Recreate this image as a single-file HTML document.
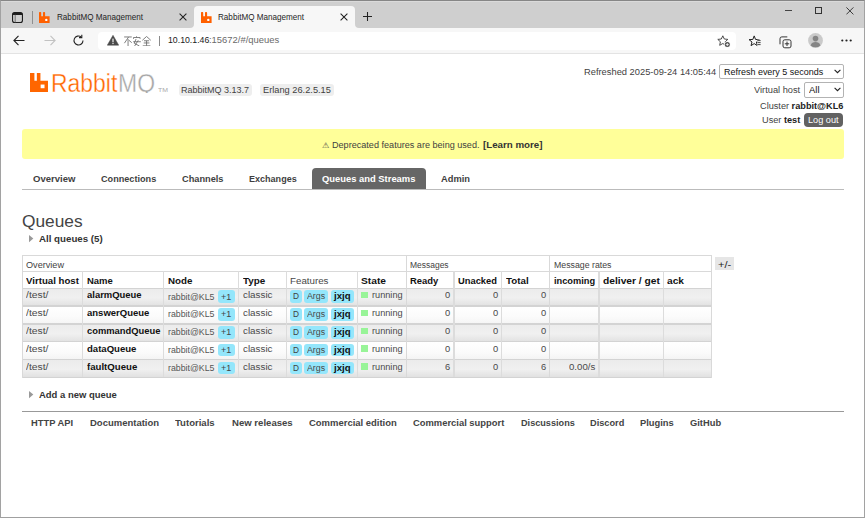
<!DOCTYPE html>
<html><head><meta charset="utf-8">
<style>
*{box-sizing:border-box}
html,body{margin:0;padding:0;background:#fff;width:865px;height:518px;overflow:hidden}
body{font-family:"Liberation Sans",sans-serif;position:relative}
.a{position:absolute;white-space:nowrap}
.t{position:absolute;white-space:nowrap;transform-origin:0 0;font-family:"Liberation Sans",sans-serif}
.t b{font-weight:bold;color:#222}
</style></head><body>
<style>
#tabstrip{position:absolute;left:0;top:0;width:865px;height:28px;background:#cfcfcf}
#toolbar{position:absolute;left:0;top:28px;width:865px;height:26px;background:#f7f7f7;border-bottom:1px solid #e3e3e3}
.tab{position:absolute;top:6px;height:22px;border-radius:4px 4px 0 0}
.ttl{font-size:9.4px;color:#1f1f1f;transform-origin:0 0;transform:scaleX(0.865)}
#addr{position:absolute;left:97.5px;top:31.5px;width:638px;height:18.5px;background:#fff;border-radius:4px}
</style>
<div id="tabstrip"></div>
<div id="toolbar"></div>
<svg class="a" style="left:11.5px;top:11.5px" width="11" height="11" viewBox="0 0 11 11"><rect x="0.55" y="0.55" width="9.9" height="9.9" rx="2" fill="none" stroke="#1d1d1d" stroke-width="1.1"/><path d="M0.5 3V2.6A2.1 2.1 0 0 1 2.6 0.5H8.4A2.1 2.1 0 0 1 10.5 2.6V3Z" fill="#1d1d1d"/><line x1="3.2" y1="2.8" x2="3.2" y2="10.4" stroke="#666" stroke-width="0.9"/></svg>
<div class="a" style="left:32px;top:10.5px;width:1px;height:13px;background:#8f8f8f"></div>
<svg class="a" style="left:39.3px;top:11.6px" width="11" height="11" viewBox="0 0 11 11"><path d="M0 1A1.1 1.1 0 0 1 2.2 1V4.3H4V1A1.05 1.05 0 0 1 6.1 1V4.3H10.6V10.9H0Z" fill="#ff6000"/><circle cx="7.3" cy="7.9" r="1.2" fill="#fff"/></svg>
<div class="a ttl" style="left:57.3px;top:10.8px">RabbitMQ Management</div>
<svg class="a" style="left:179px;top:12.5px" width="8" height="8" viewBox="0 0 8 8"><path d="M0.6 0.6L7.4 7.4M7.4 0.6L0.6 7.4" stroke="#222" stroke-width="1.05"/></svg>
<div class="tab" style="left:193.7px;width:161.5px;background:#f7f7f7"></div>
<svg class="a" style="left:189.7px;top:24px" width="4" height="4" viewBox="0 0 4 4"><path d="M4 0V4H0A4 4 0 0 0 4 0Z" fill="#f7f7f7"/></svg>
<svg class="a" style="left:355.2px;top:24px" width="4" height="4" viewBox="0 0 4 4"><path d="M0 0V4H4A4 4 0 0 1 0 0Z" fill="#f7f7f7"/></svg>
<svg class="a" style="left:201.2px;top:11.6px" width="11" height="11" viewBox="0 0 11 11"><path d="M0 1A1.1 1.1 0 0 1 2.2 1V4.3H4V1A1.05 1.05 0 0 1 6.1 1V4.3H10.6V10.9H0Z" fill="#ff6000"/><circle cx="7.3" cy="7.9" r="1.2" fill="#fff"/></svg>
<div class="a ttl" style="left:218.2px;top:10.8px">RabbitMQ Management</div>
<svg class="a" style="left:340px;top:12.5px" width="8" height="8" viewBox="0 0 8 8"><path d="M0.6 0.6L7.4 7.4M7.4 0.6L0.6 7.4" stroke="#222" stroke-width="1.05"/></svg>
<svg class="a" style="left:362.5px;top:11.5px" width="9" height="9" viewBox="0 0 9 9"><path d="M4.5 0V9M0 4.5H9" stroke="#222" stroke-width="1.05"/></svg>
<div class="a" style="left:785px;top:9.6px;width:6.5px;height:1px;background:#444"></div>
<div class="a" style="left:815.2px;top:7.2px;width:7px;height:7px;border:1px solid #333"></div>
<svg class="a" style="left:846px;top:7px" width="8" height="8" viewBox="0 0 8 8"><path d="M0.4 0.4L7.4 7.4M7.4 0.4L0.4 7.4" stroke="#333" stroke-width="0.95"/></svg>
<svg class="a" style="left:13px;top:35px" width="12" height="11" viewBox="0 0 12 11"><path d="M11.5 5.5H1M5.5 0.8L0.9 5.5L5.5 10.2" fill="none" stroke="#222" stroke-width="1.1"/></svg>
<svg class="a" style="left:43.5px;top:35px" width="12" height="11" viewBox="0 0 12 11"><path d="M0.5 5.5H11M6.5 0.8L11.1 5.5L6.5 10.2" fill="none" stroke="#c2c2c2" stroke-width="1.1"/></svg>
<svg class="a" style="left:72px;top:34px" width="13" height="13" viewBox="0 0 13 13"><path d="M11 6.5A4.5 4.5 0 1 1 9.2 2.9" fill="none" stroke="#222" stroke-width="1.1"/><path d="M9.8 0.8V3.6H7" fill="none" stroke="#222" stroke-width="1.1"/></svg>
<div id="addr"></div>
<svg class="a" style="left:106.5px;top:35.3px" width="12" height="10.5" viewBox="0 0 12 10.5"><path d="M6 0.3L11.7 10.2H0.3Z" fill="#4a4a4a" stroke="#4a4a4a" stroke-width="0.5" stroke-linejoin="round"/><rect x="5.45" y="3.6" width="1.1" height="3.7" fill="#fff"/><rect x="5.45" y="8" width="1.1" height="1.1" fill="#fff"/></svg>
<svg class="a" style="left:123px;top:35.5px" width="29" height="10.5" viewBox="0 0 29 11" fill="none" stroke="#6b6b6b" stroke-width="0.9">
<path d="M0.5 1H8.5M5.2 1L0.8 7.5M4.6 3.2V10.8M5.5 4.5L8.5 7"/>
<path d="M13.5 0.3V1.5M10.3 3V1.6H17.2V3M13 3.2L11 7.5L16.5 10.5M10 6H18M15.3 4.5L11.5 10.5"/>
<path d="M24 0.5L19.6 4.5M24 0.5L28.4 4.5M21.3 5H26.7M21 7.3H27M24 5V10.2M20 10.3H28"/>
</svg>
<div class="a" style="left:158.5px;top:35.5px;width:1px;height:10px;background:#8a8a8a"></div>
<div class="a" style="left:168.3px;top:35.2px;font-size:9.3px;color:#1a1a1a;transform-origin:0 0;transform:scaleX(0.94)">10.10.1.46</div><div class="a" style="left:208.6px;top:35.2px;font-size:9.3px;color:#6a6a6a;transform-origin:0 0;transform:scaleX(1.015)">:15672/#/queues</div>
<svg class="a" style="left:716.5px;top:35px" width="14" height="13" viewBox="0 0 14 13"><path d="M5.8 0.8L7.3 4L10.8 4.4L8.2 6.8L8.9 10.3L5.8 8.5L2.7 10.3L3.4 6.8L0.8 4.4L4.3 4Z" fill="none" stroke="#3a3a3a" stroke-width="0.9" stroke-linejoin="round"/><circle cx="10.3" cy="9.6" r="3.2" fill="#f7f7f7"/><circle cx="10.3" cy="9.6" r="2.5" fill="#505050"/><path d="M10.3 8.1V11.1M8.8 9.6H11.8" stroke="#fff" stroke-width="0.8"/></svg>
<svg class="a" style="left:748.8px;top:34.5px" width="13" height="13" viewBox="0 0 13 13"><path d="M5.20 0.90L6.55 4.44L10.34 4.63L7.39 7.01L8.37 10.67L5.20 8.60L2.03 10.67L3.01 7.01L0.06 4.63L3.85 4.44Z" fill="none" stroke="#222" stroke-width="1" stroke-linejoin="round"/><rect x="8.3" y="4.6" width="5" height="7" fill="#f7f7f7"/><path d="M8.4 5.6H11.6M8.4 7.6H11.6M8.4 9.6H11.6" stroke="#333" stroke-width="0.9"/></svg>
<svg class="a" style="left:778.5px;top:35.5px" width="13" height="13" viewBox="0 0 13 13"><rect x="4" y="3.8" width="8" height="8" rx="1.8" fill="none" stroke="#2a2a2a" stroke-width="0.95"/><path d="M1 8.3V2.7A1.8 1.8 0 0 1 2.8 0.9H8.3" fill="none" stroke="#2a2a2a" stroke-width="0.95"/><path d="M8 5.6V10M5.8 7.8H10.2" stroke="#2a2a2a" stroke-width="0.95"/></svg>
<svg class="a" style="left:807.8px;top:32.8px" width="15" height="15" viewBox="0 0 15 15"><circle cx="7.5" cy="7.5" r="7.4" fill="#cacaca"/><circle cx="7.5" cy="5.6" r="2.8" fill="#858585"/><path d="M2.6 12.4C3.3 9.8 5.2 9.1 7.5 9.1S11.7 9.8 12.4 12.4A7.4 7.4 0 0 1 2.6 12.4Z" fill="#858585"/></svg>
<svg class="a" style="left:841px;top:39px" width="11" height="3" viewBox="0 0 11 3"><circle cx="1.3" cy="1.5" r="1.1" fill="#222"/><circle cx="5.5" cy="1.5" r="1.1" fill="#222"/><circle cx="9.7" cy="1.5" r="1.1" fill="#222"/></svg>

<svg class="a" style="left:30px;top:73px" width="18" height="19" viewBox="0 0 17.6 18.6"><path d="M0 0H4.3V7.7H6.7V0H10.2V7.7H17.6V18.6H0Z" fill="#f60"/><rect x="10.4" y="11.3" width="3.8" height="3.6" fill="#fff"/></svg><div class="a" style="left:135px;top:93px;width:22px;height:5px;background:#fff;z-index:5"></div><div class="a" style="left:178.8px;top:83.8px;width:72.8px;height:11.8px;background:#eee;border-radius:3px"></div><div class="a" style="left:260.4px;top:83.8px;width:73.6px;height:11.8px;background:#eee;border-radius:3px"></div><div class="a" style="left:718.7px;top:63.5px;width:125px;height:15.5px;background:#fff;border:1px solid #b3b3b3;border-radius:2px"></div><svg class="a" style="left:834px;top:69px" width="7" height="5" viewBox="0 0 7 5"><path d="M0.6 0.8L3.5 3.7L6.4 0.8" fill="none" stroke="#222" stroke-width="1.1"/></svg><div class="a" style="left:803.8px;top:82.4px;width:39.8px;height:15.2px;background:#fff;border:1px solid #b3b3b3;border-radius:2px"></div><svg class="a" style="left:834px;top:87px" width="7" height="5" viewBox="0 0 7 5"><path d="M0.6 0.8L3.5 3.7L6.4 0.8" fill="none" stroke="#222" stroke-width="1.1"/></svg><div class="a" style="left:803.8px;top:113.3px;width:39.5px;height:13.3px;background:#626262;border-radius:4px"></div><div class="a" style="left:22px;top:128.9px;width:821.5px;height:30.5px;background:#ffff99;border-radius:3px"></div><div class="a" style="left:22px;top:188.9px;width:821.5px;height:1.1px;background:#bbb"></div><div class="a" style="left:311.8px;top:167.9px;width:114.2px;height:21px;background:#666;border-radius:4px 4px 0 0"></div><svg class="a" style="left:29px;top:234.5px" width="5" height="8" viewBox="0 0 5 8"><path d="M0 0L4.3 3.6L0 7.2Z" fill="#999"/></svg><div class="a" style="left:22.4px;top:255.3px;width:688.8000000000001px;height:122.09999999999997px;background:#fff"></div><div class="a" style="left:22.4px;top:288.1px;width:688.8000000000001px;height:17.899999999999977px;background:linear-gradient(#ebebeb,#f0f0f0 55%,#e1e1e1)"></div><div class="a" style="left:22.4px;top:306.0px;width:688.8000000000001px;height:18.0px;background:linear-gradient(#fff,#fbfbfb 60%,#f4f4f4)"></div><div class="a" style="left:22.4px;top:324.0px;width:688.8000000000001px;height:17.80000000000001px;background:linear-gradient(#ebebeb,#f0f0f0 55%,#e1e1e1)"></div><div class="a" style="left:22.4px;top:341.8px;width:688.8000000000001px;height:17.69999999999999px;background:linear-gradient(#fff,#fbfbfb 60%,#f4f4f4)"></div><div class="a" style="left:22.4px;top:359.5px;width:688.8000000000001px;height:17.899999999999977px;background:linear-gradient(#ebebeb,#f0f0f0 55%,#e1e1e1)"></div><div class="a" style="left:22.4px;top:255.1px;width:688.8000000000001px;height:1.2px;background:#d9d9d9"></div><div class="a" style="left:22.4px;top:271.1px;width:688.8000000000001px;height:1.2px;background:#d9d9d9"></div><div class="a" style="left:22.4px;top:287.5px;width:688.8000000000001px;height:1.2px;background:#d3d3d3"></div><div class="a" style="left:22.4px;top:305.4px;width:688.8000000000001px;height:1.2px;background:#d3d3d3"></div><div class="a" style="left:22.4px;top:323.4px;width:688.8000000000001px;height:1.2px;background:#d3d3d3"></div><div class="a" style="left:22.4px;top:341.2px;width:688.8000000000001px;height:1.2px;background:#d3d3d3"></div><div class="a" style="left:22.4px;top:358.9px;width:688.8000000000001px;height:1.2px;background:#d3d3d3"></div><div class="a" style="left:22.4px;top:376.79999999999995px;width:688.8000000000001px;height:1.2px;background:#d3d3d3"></div><div class="a" style="left:21.9px;top:255.3px;width:1.2px;height:122.69999999999996px;background:#d9d9d9"></div><div class="a" style="left:710.6px;top:255.3px;width:1.2px;height:122.69999999999996px;background:#d9d9d9"></div><div class="a" style="left:406.2px;top:255.3px;width:1.2px;height:122.09999999999997px;background:#d9d9d9"></div><div class="a" style="left:549.0px;top:255.3px;width:1.2px;height:122.09999999999997px;background:#d9d9d9"></div><div class="a" style="left:82.10000000000001px;top:271.4px;width:1.2px;height:106.0px;background:#dcdcdc"></div><div class="a" style="left:162.70000000000002px;top:271.4px;width:1.2px;height:106.0px;background:#dcdcdc"></div><div class="a" style="left:237.8px;top:271.4px;width:1.2px;height:106.0px;background:#dcdcdc"></div><div class="a" style="left:285.7px;top:271.4px;width:1.2px;height:106.0px;background:#dcdcdc"></div><div class="a" style="left:356.79999999999995px;top:271.4px;width:1.2px;height:106.0px;background:#dcdcdc"></div><div class="a" style="left:453.4px;top:271.4px;width:1.2px;height:106.0px;background:#dcdcdc"></div><div class="a" style="left:500.79999999999995px;top:271.4px;width:1.2px;height:106.0px;background:#dcdcdc"></div><div class="a" style="left:598.4px;top:271.4px;width:1.2px;height:106.0px;background:#dcdcdc"></div><div class="a" style="left:663.0px;top:271.4px;width:1.2px;height:106.0px;background:#dcdcdc"></div><div class="a" style="left:217.8px;top:290.2px;width:17px;height:12.6px;background:#94e6fb;border-radius:3px"></div><div class="a" style="left:290px;top:290.2px;width:11.6px;height:12.6px;background:#94e6fb;border-radius:3px"></div><div class="a" style="left:304.4px;top:290.2px;width:23.5px;height:12.6px;background:#94e6fb;border-radius:3px"></div><div class="a" style="left:331px;top:290.2px;width:22.6px;height:12.6px;background:#94e6fb;border-radius:3px"></div><div class="a" style="left:361.3px;top:291.7px;width:7px;height:6.6px;background:#98f498"></div><div class="a" style="left:217.8px;top:308.09999999999997px;width:17px;height:12.6px;background:#94e6fb;border-radius:3px"></div><div class="a" style="left:290px;top:308.09999999999997px;width:11.6px;height:12.6px;background:#94e6fb;border-radius:3px"></div><div class="a" style="left:304.4px;top:308.09999999999997px;width:23.5px;height:12.6px;background:#94e6fb;border-radius:3px"></div><div class="a" style="left:331px;top:308.09999999999997px;width:22.6px;height:12.6px;background:#94e6fb;border-radius:3px"></div><div class="a" style="left:361.3px;top:309.59999999999997px;width:7px;height:6.6px;background:#98f498"></div><div class="a" style="left:217.8px;top:326.09999999999997px;width:17px;height:12.6px;background:#94e6fb;border-radius:3px"></div><div class="a" style="left:290px;top:326.09999999999997px;width:11.6px;height:12.6px;background:#94e6fb;border-radius:3px"></div><div class="a" style="left:304.4px;top:326.09999999999997px;width:23.5px;height:12.6px;background:#94e6fb;border-radius:3px"></div><div class="a" style="left:331px;top:326.09999999999997px;width:22.6px;height:12.6px;background:#94e6fb;border-radius:3px"></div><div class="a" style="left:361.3px;top:327.59999999999997px;width:7px;height:6.6px;background:#98f498"></div><div class="a" style="left:217.8px;top:343.9px;width:17px;height:12.6px;background:#94e6fb;border-radius:3px"></div><div class="a" style="left:290px;top:343.9px;width:11.6px;height:12.6px;background:#94e6fb;border-radius:3px"></div><div class="a" style="left:304.4px;top:343.9px;width:23.5px;height:12.6px;background:#94e6fb;border-radius:3px"></div><div class="a" style="left:331px;top:343.9px;width:22.6px;height:12.6px;background:#94e6fb;border-radius:3px"></div><div class="a" style="left:361.3px;top:345.4px;width:7px;height:6.6px;background:#98f498"></div><div class="a" style="left:217.8px;top:361.59999999999997px;width:17px;height:12.6px;background:#94e6fb;border-radius:3px"></div><div class="a" style="left:290px;top:361.59999999999997px;width:11.6px;height:12.6px;background:#94e6fb;border-radius:3px"></div><div class="a" style="left:304.4px;top:361.59999999999997px;width:23.5px;height:12.6px;background:#94e6fb;border-radius:3px"></div><div class="a" style="left:331px;top:361.59999999999997px;width:22.6px;height:12.6px;background:#94e6fb;border-radius:3px"></div><div class="a" style="left:361.3px;top:363.09999999999997px;width:7px;height:6.6px;background:#98f498"></div><div class="a" style="left:715px;top:257.3px;width:18.9px;height:12.5px;background:#e6e6e6"></div><svg class="a" style="left:28.8px;top:390.9px" width="5" height="8" viewBox="0 0 5 8"><path d="M0 0L4.3 3.6L0 7.2Z" fill="#999"/></svg><div class="a" style="left:22px;top:410.8px;width:821.5px;height:1.1px;background:#999"></div>
<div class="t" style="left:50.80px;top:71.47px;font-size:25.2px;line-height:25.2px;font-weight:normal;color:#f60;transform:scaleX(0.9106);-webkit-text-stroke:0.35px #fff">Rabbit</div><div class="t" style="left:118.20px;top:71.47px;font-size:25.2px;line-height:25.2px;font-weight:normal;color:#a6a6a6;transform:scaleX(0.9118);-webkit-text-stroke:0.35px #fff">MQ</div><div class="t" style="left:158.00px;top:87.45px;font-size:6.2px;line-height:6.2px;font-weight:normal;color:#aaa;transform:scaleX(1.1189);">TM</div><div class="t" style="left:181.40px;top:86.17px;font-size:8.9px;line-height:8.9px;font-weight:normal;color:#3f3f3f;transform:scaleX(1.0150);">RabbitMQ 3.13.7</div><div class="t" style="left:263.30px;top:86.17px;font-size:8.9px;line-height:8.9px;font-weight:normal;color:#3f3f3f;transform:scaleX(1.0424);">Erlang 26.2.5.15</div><div class="t" style="left:583.50px;top:68.17px;font-size:8.9px;line-height:8.9px;font-weight:normal;color:#3f3f3f;transform:scaleX(1.0506);">Refreshed 2025-09-24 14:05:44</div><div class="t" style="left:724.30px;top:67.78px;font-size:9px;line-height:9px;font-weight:normal;color:#111;transform:scaleX(0.9964);">Refresh every 5 seconds</div><div class="t" style="left:754.40px;top:86.37px;font-size:8.9px;line-height:8.9px;font-weight:normal;color:#3f3f3f;transform:scaleX(1.0441);">Virtual host</div><div class="t" style="left:809.00px;top:86.28px;font-size:9px;line-height:9px;font-weight:normal;color:#111;transform:scaleX(1.0484);">All</div><div class="t" style="left:759.80px;top:101.67px;font-size:8.9px;line-height:8.9px;font-weight:normal;color:#3f3f3f;transform:scaleX(1.0340);">Cluster <b>rabbit@KL6</b></div><div class="t" style="left:762.00px;top:116.27px;font-size:8.9px;line-height:8.9px;font-weight:normal;color:#3f3f3f;transform:scaleX(1.0347);">User <b>test</b></div><div class="t" style="left:808.40px;top:116.47px;font-size:8.9px;line-height:8.9px;font-weight:normal;color:#fff;transform:scaleX(1.0329);">Log out</div><div class="t" style="left:321.90px;top:141.56px;font-size:8.2px;line-height:8.2px;font-weight:normal;color:#4a4a4a;transform:scaleX(1.0286);">&#9888;</div><div class="t" style="left:332.10px;top:140.87px;font-size:8.9px;line-height:8.9px;font-weight:normal;color:#3f3f3f;transform:scaleX(1.0238);">Deprecated features are being used.</div><div class="t" style="left:483.20px;top:140.87px;font-size:8.9px;line-height:8.9px;font-weight:bold;color:#333;transform:scaleX(1.0968);">[Learn more]</div><div class="t" style="left:32.80px;top:174.87px;font-size:8.9px;line-height:8.9px;font-weight:bold;color:#3f3f3f;transform:scaleX(1.0738);">Overview</div><div class="t" style="left:101.00px;top:174.87px;font-size:8.9px;line-height:8.9px;font-weight:bold;color:#3f3f3f;transform:scaleX(1.0270);">Connections</div><div class="t" style="left:181.50px;top:174.87px;font-size:8.9px;line-height:8.9px;font-weight:bold;color:#3f3f3f;transform:scaleX(1.0387);">Channels</div><div class="t" style="left:248.80px;top:174.87px;font-size:8.9px;line-height:8.9px;font-weight:bold;color:#3f3f3f;transform:scaleX(1.0176);">Exchanges</div><div class="t" style="left:441.00px;top:174.87px;font-size:8.9px;line-height:8.9px;font-weight:bold;color:#3f3f3f;transform:scaleX(1.0467);">Admin</div><div class="t" style="left:322.30px;top:174.87px;font-size:8.9px;line-height:8.9px;font-weight:bold;color:#fff;transform:scaleX(1.0578);">Queues and Streams</div><div class="t" style="left:21.90px;top:213.96px;font-size:16px;line-height:16px;font-weight:normal;color:#444;transform:scaleX(1.0812);">Queues</div><div class="t" style="left:39.30px;top:235.27px;font-size:8.9px;line-height:8.9px;font-weight:bold;color:#333;transform:scaleX(1.0944);">All queues (5)</div><div class="t" style="left:26.00px;top:260.77px;font-size:8.9px;line-height:8.9px;font-weight:normal;color:#3f3f3f;transform:scaleX(1.0270);">Overview</div><div class="t" style="left:410.20px;top:260.77px;font-size:8.9px;line-height:8.9px;font-weight:normal;color:#3f3f3f;transform:scaleX(0.9542);">Messages</div><div class="t" style="left:553.90px;top:260.77px;font-size:8.9px;line-height:8.9px;font-weight:normal;color:#3f3f3f;transform:scaleX(0.9877);">Message rates</div><div class="t" style="left:26.30px;top:277.07px;font-size:8.9px;line-height:8.9px;font-weight:bold;color:#111;transform:scaleX(1.0872);">Virtual host</div><div class="t" style="left:86.90px;top:277.07px;font-size:8.9px;line-height:8.9px;font-weight:bold;color:#111;transform:scaleX(1.0667);">Name</div><div class="t" style="left:167.60px;top:277.07px;font-size:8.9px;line-height:8.9px;font-weight:bold;color:#111;transform:scaleX(1.0997);">Node</div><div class="t" style="left:242.70px;top:277.07px;font-size:8.9px;line-height:8.9px;font-weight:bold;color:#111;transform:scaleX(1.1115);">Type</div><div class="t" style="left:289.80px;top:277.07px;font-size:8.9px;line-height:8.9px;font-weight:normal;color:#484848;transform:scaleX(1.0990);">Features</div><div class="t" style="left:361.40px;top:277.07px;font-size:8.9px;line-height:8.9px;font-weight:bold;color:#111;transform:scaleX(1.1519);">State</div><div class="t" style="left:410.30px;top:277.07px;font-size:8.9px;line-height:8.9px;font-weight:bold;color:#111;transform:scaleX(1.0623);">Ready</div><div class="t" style="left:458.20px;top:277.07px;font-size:8.9px;line-height:8.9px;font-weight:bold;color:#111;transform:scaleX(1.0514);">Unacked</div><div class="t" style="left:506.30px;top:277.07px;font-size:8.9px;line-height:8.9px;font-weight:bold;color:#111;transform:scaleX(1.0999);">Total</div><div class="t" style="left:553.90px;top:277.07px;font-size:8.9px;line-height:8.9px;font-weight:bold;color:#111;transform:scaleX(1.0417);">incoming</div><div class="t" style="left:602.90px;top:277.07px;font-size:8.9px;line-height:8.9px;font-weight:bold;color:#111;transform:scaleX(1.1535);">deliver / get</div><div class="t" style="left:667.20px;top:277.07px;font-size:8.9px;line-height:8.9px;font-weight:bold;color:#111;transform:scaleX(1.1477);">ack</div><div class="t" style="left:25.90px;top:291.37px;font-size:8.9px;line-height:8.9px;font-weight:normal;color:#4a4a4a;transform:scaleX(1.1688);">/test/</div><div class="t" style="left:86.80px;top:291.37px;font-size:8.9px;line-height:8.9px;font-weight:bold;color:#111;transform:scaleX(1.0641);">alarmQueue</div><div class="t" style="left:167.90px;top:292.57px;font-size:8.9px;line-height:8.9px;font-weight:normal;color:#555;transform:scaleX(0.9890);">rabbit@KL5</div><div class="t" style="left:220.60px;top:292.57px;font-size:8.9px;line-height:8.9px;font-weight:normal;color:#444;transform:scaleX(1.0074);">+1</div><div class="t" style="left:242.70px;top:291.37px;font-size:8.9px;line-height:8.9px;font-weight:normal;color:#4a4a4a;transform:scaleX(1.1073);">classic</div><div class="t" style="left:292.80px;top:292.37px;font-size:8.9px;line-height:8.9px;font-weight:normal;color:#404040;transform:scaleX(0.9343);">D</div><div class="t" style="left:307.10px;top:292.37px;font-size:8.9px;line-height:8.9px;font-weight:normal;color:#484848;transform:scaleX(0.9918);">Args</div><div class="t" style="left:334.00px;top:292.37px;font-size:8.9px;line-height:8.9px;font-weight:bold;color:#111;transform:scaleX(1.0852);">jxjq</div><div class="t" style="left:371.50px;top:291.37px;font-size:8.9px;line-height:8.9px;font-weight:normal;color:#4a4a4a;transform:scaleX(1.0335);">running</div><div class="t" style="left:444.80px;top:291.37px;font-size:8.9px;line-height:8.9px;font-weight:normal;color:#4a4a4a;transform:scaleX(1.0532);">0</div><div class="t" style="left:492.50px;top:291.37px;font-size:8.9px;line-height:8.9px;font-weight:normal;color:#4a4a4a;transform:scaleX(1.0532);">0</div><div class="t" style="left:540.80px;top:291.37px;font-size:8.9px;line-height:8.9px;font-weight:normal;color:#4a4a4a;transform:scaleX(1.0532);">0</div><div class="t" style="left:25.90px;top:309.27px;font-size:8.9px;line-height:8.9px;font-weight:normal;color:#4a4a4a;transform:scaleX(1.1688);">/test/</div><div class="t" style="left:86.80px;top:309.27px;font-size:8.9px;line-height:8.9px;font-weight:bold;color:#111;transform:scaleX(1.0718);">answerQueue</div><div class="t" style="left:167.90px;top:310.47px;font-size:8.9px;line-height:8.9px;font-weight:normal;color:#555;transform:scaleX(0.9890);">rabbit@KL5</div><div class="t" style="left:220.60px;top:310.47px;font-size:8.9px;line-height:8.9px;font-weight:normal;color:#444;transform:scaleX(1.0074);">+1</div><div class="t" style="left:242.70px;top:309.27px;font-size:8.9px;line-height:8.9px;font-weight:normal;color:#4a4a4a;transform:scaleX(1.1073);">classic</div><div class="t" style="left:292.80px;top:310.27px;font-size:8.9px;line-height:8.9px;font-weight:normal;color:#404040;transform:scaleX(0.9343);">D</div><div class="t" style="left:307.10px;top:310.27px;font-size:8.9px;line-height:8.9px;font-weight:normal;color:#484848;transform:scaleX(0.9918);">Args</div><div class="t" style="left:334.00px;top:310.27px;font-size:8.9px;line-height:8.9px;font-weight:bold;color:#111;transform:scaleX(1.0852);">jxjq</div><div class="t" style="left:371.50px;top:309.27px;font-size:8.9px;line-height:8.9px;font-weight:normal;color:#4a4a4a;transform:scaleX(1.0335);">running</div><div class="t" style="left:444.80px;top:309.27px;font-size:8.9px;line-height:8.9px;font-weight:normal;color:#4a4a4a;transform:scaleX(1.0532);">0</div><div class="t" style="left:492.50px;top:309.27px;font-size:8.9px;line-height:8.9px;font-weight:normal;color:#4a4a4a;transform:scaleX(1.0532);">0</div><div class="t" style="left:540.80px;top:309.27px;font-size:8.9px;line-height:8.9px;font-weight:normal;color:#4a4a4a;transform:scaleX(1.0532);">0</div><div class="t" style="left:25.90px;top:327.27px;font-size:8.9px;line-height:8.9px;font-weight:normal;color:#4a4a4a;transform:scaleX(1.1688);">/test/</div><div class="t" style="left:86.80px;top:327.27px;font-size:8.9px;line-height:8.9px;font-weight:bold;color:#111;transform:scaleX(1.0568);">commandQueue</div><div class="t" style="left:167.90px;top:328.47px;font-size:8.9px;line-height:8.9px;font-weight:normal;color:#555;transform:scaleX(0.9890);">rabbit@KL5</div><div class="t" style="left:220.60px;top:328.47px;font-size:8.9px;line-height:8.9px;font-weight:normal;color:#444;transform:scaleX(1.0074);">+1</div><div class="t" style="left:242.70px;top:327.27px;font-size:8.9px;line-height:8.9px;font-weight:normal;color:#4a4a4a;transform:scaleX(1.1073);">classic</div><div class="t" style="left:292.80px;top:328.27px;font-size:8.9px;line-height:8.9px;font-weight:normal;color:#404040;transform:scaleX(0.9343);">D</div><div class="t" style="left:307.10px;top:328.27px;font-size:8.9px;line-height:8.9px;font-weight:normal;color:#484848;transform:scaleX(0.9918);">Args</div><div class="t" style="left:334.00px;top:328.27px;font-size:8.9px;line-height:8.9px;font-weight:bold;color:#111;transform:scaleX(1.0852);">jxjq</div><div class="t" style="left:371.50px;top:327.27px;font-size:8.9px;line-height:8.9px;font-weight:normal;color:#4a4a4a;transform:scaleX(1.0335);">running</div><div class="t" style="left:444.80px;top:327.27px;font-size:8.9px;line-height:8.9px;font-weight:normal;color:#4a4a4a;transform:scaleX(1.0532);">0</div><div class="t" style="left:492.50px;top:327.27px;font-size:8.9px;line-height:8.9px;font-weight:normal;color:#4a4a4a;transform:scaleX(1.0532);">0</div><div class="t" style="left:540.80px;top:327.27px;font-size:8.9px;line-height:8.9px;font-weight:normal;color:#4a4a4a;transform:scaleX(1.0532);">0</div><div class="t" style="left:25.90px;top:345.07px;font-size:8.9px;line-height:8.9px;font-weight:normal;color:#4a4a4a;transform:scaleX(1.1688);">/test/</div><div class="t" style="left:86.80px;top:345.07px;font-size:8.9px;line-height:8.9px;font-weight:bold;color:#111;transform:scaleX(1.0768);">dataQueue</div><div class="t" style="left:167.90px;top:346.27px;font-size:8.9px;line-height:8.9px;font-weight:normal;color:#555;transform:scaleX(0.9890);">rabbit@KL5</div><div class="t" style="left:220.60px;top:346.27px;font-size:8.9px;line-height:8.9px;font-weight:normal;color:#444;transform:scaleX(1.0074);">+1</div><div class="t" style="left:242.70px;top:345.07px;font-size:8.9px;line-height:8.9px;font-weight:normal;color:#4a4a4a;transform:scaleX(1.1073);">classic</div><div class="t" style="left:292.80px;top:346.07px;font-size:8.9px;line-height:8.9px;font-weight:normal;color:#404040;transform:scaleX(0.9343);">D</div><div class="t" style="left:307.10px;top:346.07px;font-size:8.9px;line-height:8.9px;font-weight:normal;color:#484848;transform:scaleX(0.9918);">Args</div><div class="t" style="left:334.00px;top:346.07px;font-size:8.9px;line-height:8.9px;font-weight:bold;color:#111;transform:scaleX(1.0852);">jxjq</div><div class="t" style="left:371.50px;top:345.07px;font-size:8.9px;line-height:8.9px;font-weight:normal;color:#4a4a4a;transform:scaleX(1.0335);">running</div><div class="t" style="left:444.80px;top:345.07px;font-size:8.9px;line-height:8.9px;font-weight:normal;color:#4a4a4a;transform:scaleX(1.0532);">0</div><div class="t" style="left:492.50px;top:345.07px;font-size:8.9px;line-height:8.9px;font-weight:normal;color:#4a4a4a;transform:scaleX(1.0532);">0</div><div class="t" style="left:540.80px;top:345.07px;font-size:8.9px;line-height:8.9px;font-weight:normal;color:#4a4a4a;transform:scaleX(1.0532);">0</div><div class="t" style="left:25.90px;top:362.77px;font-size:8.9px;line-height:8.9px;font-weight:normal;color:#4a4a4a;transform:scaleX(1.1688);">/test/</div><div class="t" style="left:86.80px;top:362.77px;font-size:8.9px;line-height:8.9px;font-weight:bold;color:#111;transform:scaleX(1.0850);">faultQueue</div><div class="t" style="left:167.90px;top:363.97px;font-size:8.9px;line-height:8.9px;font-weight:normal;color:#555;transform:scaleX(0.9890);">rabbit@KL5</div><div class="t" style="left:220.60px;top:363.97px;font-size:8.9px;line-height:8.9px;font-weight:normal;color:#444;transform:scaleX(1.0074);">+1</div><div class="t" style="left:242.70px;top:362.77px;font-size:8.9px;line-height:8.9px;font-weight:normal;color:#4a4a4a;transform:scaleX(1.1073);">classic</div><div class="t" style="left:292.80px;top:363.77px;font-size:8.9px;line-height:8.9px;font-weight:normal;color:#404040;transform:scaleX(0.9343);">D</div><div class="t" style="left:307.10px;top:363.77px;font-size:8.9px;line-height:8.9px;font-weight:normal;color:#484848;transform:scaleX(0.9918);">Args</div><div class="t" style="left:334.00px;top:363.77px;font-size:8.9px;line-height:8.9px;font-weight:bold;color:#111;transform:scaleX(1.0852);">jxjq</div><div class="t" style="left:371.50px;top:362.77px;font-size:8.9px;line-height:8.9px;font-weight:normal;color:#4a4a4a;transform:scaleX(1.0335);">running</div><div class="t" style="left:444.80px;top:362.77px;font-size:8.9px;line-height:8.9px;font-weight:normal;color:#4a4a4a;transform:scaleX(1.0532);">6</div><div class="t" style="left:492.50px;top:362.77px;font-size:8.9px;line-height:8.9px;font-weight:normal;color:#4a4a4a;transform:scaleX(1.0532);">0</div><div class="t" style="left:540.80px;top:362.77px;font-size:8.9px;line-height:8.9px;font-weight:normal;color:#4a4a4a;transform:scaleX(1.0532);">6</div><div class="t" style="left:569.00px;top:362.77px;font-size:8.9px;line-height:8.9px;font-weight:normal;color:#4a4a4a;transform:scaleX(1.0873);">0.00/s</div><div class="t" style="left:718.20px;top:260.77px;font-size:8.9px;line-height:8.9px;font-weight:normal;color:#222;transform:scaleX(1.2442);">+/-</div><div class="t" style="left:39.20px;top:391.17px;font-size:8.9px;line-height:8.9px;font-weight:bold;color:#333;transform:scaleX(1.0660);">Add a new queue</div><div class="t" style="left:30.90px;top:419.17px;font-size:8.9px;line-height:8.9px;font-weight:bold;color:#444;transform:scaleX(1.0537);">HTTP API</div><div class="t" style="left:89.60px;top:419.17px;font-size:8.9px;line-height:8.9px;font-weight:bold;color:#444;transform:scaleX(1.0698);">Documentation</div><div class="t" style="left:175.40px;top:419.17px;font-size:8.9px;line-height:8.9px;font-weight:bold;color:#444;transform:scaleX(1.0753);">Tutorials</div><div class="t" style="left:231.60px;top:419.17px;font-size:8.9px;line-height:8.9px;font-weight:bold;color:#444;transform:scaleX(1.0791);">New releases</div><div class="t" style="left:308.60px;top:419.17px;font-size:8.9px;line-height:8.9px;font-weight:bold;color:#444;transform:scaleX(1.0661);">Commercial edition</div><div class="t" style="left:413.00px;top:419.17px;font-size:8.9px;line-height:8.9px;font-weight:bold;color:#444;transform:scaleX(1.0578);">Commercial support</div><div class="t" style="left:520.50px;top:419.17px;font-size:8.9px;line-height:8.9px;font-weight:bold;color:#444;transform:scaleX(1.0287);">Discussions</div><div class="t" style="left:590.20px;top:419.17px;font-size:8.9px;line-height:8.9px;font-weight:bold;color:#444;transform:scaleX(1.0379);">Discord</div><div class="t" style="left:640.20px;top:419.17px;font-size:8.9px;line-height:8.9px;font-weight:bold;color:#444;transform:scaleX(1.0542);">Plugins</div><div class="t" style="left:690.30px;top:419.17px;font-size:8.9px;line-height:8.9px;font-weight:bold;color:#444;transform:scaleX(1.0515);">GitHub</div>
<div style="position:absolute;left:0;top:1px;width:865px;height:1px;background:#dadada;z-index:49"></div><div style="position:absolute;left:0;top:0;width:865px;height:518px;border-left:1px solid #a2a2a2;border-right:1px solid #a2a2a2;border-bottom:1px solid #a0a0a0;border-top:1px solid #868686;z-index:50"></div>
</body></html>
